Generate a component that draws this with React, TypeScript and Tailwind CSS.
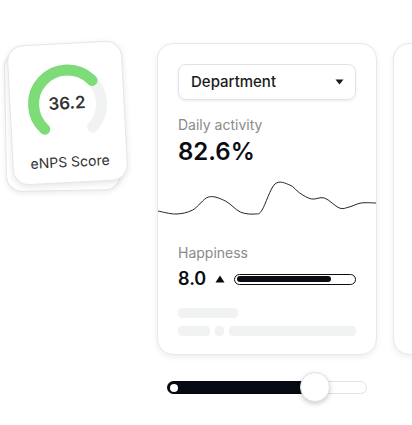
const chartPoints: [number, number][] = [
  [0, 31], [18, 34], [35, 30], [51, 17], [68, 21], [83, 32], [98, 34], [105, 30],
  [118, 4], [133, 5], [143, 13], [155, 19], [168, 18], [183, 28], [193, 27], [205, 23], [220, 23],
];

function smoothPath(pts: [number, number][]) {
  let d = `M${pts[0][0]},${pts[0][1]}`;
  for (let i = 0; i < pts.length - 1; i++) {
    const p0 = pts[i - 1] || pts[i];
    const p1 = pts[i];
    const p2 = pts[i + 1];
    const p3 = pts[i + 2] || p2;
    const c1x = p1[0] + (p2[0] - p0[0]) / 6;
    const c1y = p1[1] + (p2[1] - p0[1]) / 6;
    const c2x = p2[0] - (p3[0] - p1[0]) / 6;
    const c2y = p2[1] - (p3[1] - p1[1]) / 6;
    d += ` C${c1x},${c1y} ${c2x},${c2y} ${p2[0]},${p2[1]}`;
  }
  return d;
}

function Gauge({ value }: { value: number }) {
  const r = 34;
  const c = 2 * Math.PI * r;
  const span = c * 0.75;
  const filled = span * ((value + 100) / 200);
  return (
    <div className="relative w-[80px] h-[80px]">
      <svg width="80" height="80" viewBox="0 0 80 80">
        <g transform="rotate(135 40 40)">
          <circle cx="40" cy="40" r={r} fill="none" stroke="#f1f2f2" strokeWidth="11" strokeLinecap="round" strokeDasharray={`${span} ${c}`} />
          <circle cx="40" cy="40" r={r} fill="none" stroke="#7ddc78" strokeWidth="11" strokeLinecap="round" strokeDasharray={`${filled} ${c}`} />
        </g>
      </svg>
      <div className="absolute inset-0 flex items-center justify-center text-[17px] font-semibold text-[#333]">
        {value.toFixed(1)}
      </div>
    </div>
  );
}

function ScoreStack() {
  return (
    <div className="relative w-[135px] h-[160px] shrink-0 mt-[-3px]">
      <div className="absolute left-[5px] top-[11px] w-[115px] h-[140px] rounded-2xl bg-white border border-[#e6e6e6] shadow-[0_2px_5px_rgba(0,0,0,0.08)] rotate-[-1deg]" />
      <div className="absolute left-[10px] top-[3px] w-[115px] h-[140px] rounded-2xl bg-white border border-[#e6e6e6] shadow-[0_2px_6px_rgba(0,0,0,0.1)] rotate-[-3deg] flex flex-col items-center pt-[20px]">
        <Gauge value={36.2} />
        <div className="mt-[8px] text-sm text-[#333]">eNPS Score</div>
      </div>
    </div>
  );
}

function MainCard() {
  return (
    <div className="w-[220px] shrink-0 flex flex-col">
      <div className="h-[312px] rounded-2xl bg-white border border-[#e8e8e8] shadow-[0_2px_6px_rgba(0,0,0,0.07)] px-5 pt-5 flex flex-col">
        <div className="h-[36px] rounded-lg border border-[#e2e2e2] shadow-[0_1px_3px_rgba(0,0,0,0.08)] flex items-center justify-between pl-[12px] pr-[11px]">
          <span className="text-[15px] font-medium text-[#1a1a1a]">Department</span>
          <svg width="9" height="6" viewBox="0 0 9 6">
            <path d="M0.5 0.5 H8.5 L4.5 5.5 Z" fill="#1a1a1a" />
          </svg>
        </div>
        <div className="mt-[15px] text-sm leading-5 text-[#8a8a8a]">Daily activity</div>
        <div className="mt-[3px] text-[24px] leading-7 font-semibold text-[#0b0b12]">82.6%</div>
        <svg className="-mx-5 mt-[14px] shrink-0" width="218" height="38" viewBox="0 0 220 38" preserveAspectRatio="none">
          <path d={smoothPath(chartPoints)} fill="none" stroke="#222" strokeWidth="1" />
        </svg>
        <div className="mt-[25px] text-sm leading-5 text-[#8a8a8a]">Happiness</div>
        <div className="mt-[6px] h-5 flex items-center">
          <span className="text-[18px] font-semibold text-[#0b0b12] leading-5">8.0</span>
          <svg className="ml-[9px]" width="10" height="8" viewBox="0 0 10 8">
            <path d="M5 0.5 L9.5 7.5 H0.5 Z" fill="#0b0b12" />
          </svg>
          <div className="ml-[9px] flex-1 h-[11px] rounded-full border-[1.5px] border-[#0b0b12] p-[1.5px] flex">
            <div className="w-[81%] h-full rounded-full bg-[#0b0b12]" />
          </div>
        </div>
        <div className="mt-[19px] w-[60px] h-[10px] rounded bg-[#f1f2f2]" />
        <div className="mt-[8px] flex gap-[5px]">
          <div className="w-[32px] h-[10px] rounded bg-[#f1f2f2]" />
          <div className="w-[9px] h-[10px] rounded bg-[#f1f2f2]" />
          <div className="flex-1 h-[10px] rounded bg-[#f1f2f2]" />
        </div>
      </div>
      <div className="mt-[26px] mx-[10px] relative h-[13px]">
        <div className="absolute inset-0 rounded-full border border-[#e2e2e2] bg-white" />
        <div className="absolute left-0 top-0 bottom-0 w-[150px] rounded-l-full bg-[#070a12] flex items-center pl-[3px]">
          <div className="w-[8px] h-[8px] rounded-full bg-white" />
        </div>
        <div className="absolute left-[133px] top-[-9px] w-[30px] h-[30px] rounded-full bg-white border border-[#e2e2e2] shadow-[0_2px_5px_rgba(0,0,0,0.2)]" />
      </div>
    </div>
  );
}

export default function App() {
  return (
    <div className="w-[412px] h-[425px] overflow-hidden bg-white font-['Inter',sans-serif]">
      <div className="flex items-start pt-[43px]">
        <ScoreStack />
        <div className="ml-[22px]">
          <MainCard />
        </div>
        <div className="ml-[16px] w-[220px] h-[312px] shrink-0 rounded-2xl bg-white border border-[#e8e8e8] shadow-[0_2px_6px_rgba(0,0,0,0.07)]" />
      </div>
    </div>
  );
}
